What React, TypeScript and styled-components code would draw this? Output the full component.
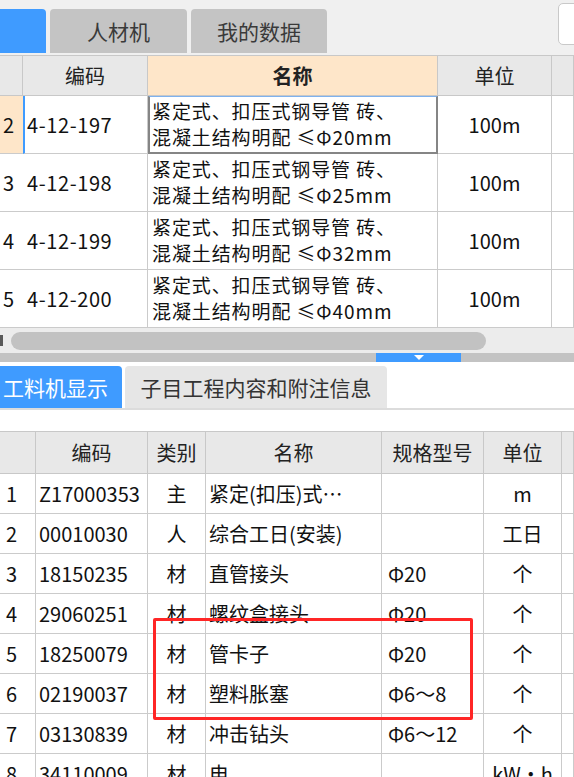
import React from "react";
import styled, { createGlobalStyle } from "styled-components";

const Global = createGlobalStyle`
  html, body { margin: 0; padding: 0; background: #ffffff; }
  body {
    width: 574px;
    height: 777px;
    overflow: hidden;
    font-family: "Noto Sans CJK SC", "Noto Sans", sans-serif;
    color: #111;
  }
`;

const Page = styled.div`
  width: 574px;
  height: 777px;
  overflow: hidden;
  display: flex;
  flex-direction: column;
  background: #fff;
`;

/* ---------- top tab bar ---------- */
const TopBar = styled.div`
  height: 55px;
  flex-shrink: 0;
  background: #f0f0f0;
  display: flex;
  align-items: flex-start;
  gap: 4px;
  overflow: hidden;
`;

const TopTab = styled.div<{ $w: number; $active?: boolean }>`
  width: ${(p) => p.$w}px;
  height: 44px;
  margin-top: 9px;
  flex-shrink: 0;
  box-sizing: border-box;
  border-radius: ${(p) => (p.$active ? "0 4px 0 0" : "4px 4px 0 0")};
  background: ${(p) => (p.$active ? "#3f9bff" : "#c4c4c4")};
  color: #3a3a3a;
  font-size: 21px;
  display: flex;
  align-items: center;
  justify-content: center;
`;

const SearchBox = styled.div`
  margin-left: auto;
  margin-right: -26px;
  margin-top: 3px;
  width: 42px;
  height: 42px;
  flex-shrink: 0;
  box-sizing: border-box;
  background: #fff;
  border: 1px solid #c9c9c9;
  border-radius: 5px;
`;

/* ---------- generic grid ---------- */
const Grid = styled.div<{ $cols: string; $head: number; $row: number }>`
  display: grid;
  grid-template-columns: ${(p) => p.$cols};
  grid-template-rows: ${(p) => p.$head}px;
  grid-auto-rows: ${(p) => p.$row}px;
  border-top: 1px solid #c8c8c8;
  flex-shrink: 0;
`;

const Head = styled.div<{ $accent?: boolean }>`
  box-sizing: border-box;
  background: ${(p) => (p.$accent ? "#fee6c9" : "#e8e8e8")};
  border-right: 1px solid #c8c8c8;
  border-bottom: 1px solid #c8c8c8;
  font-size: 20px;
  font-weight: ${(p) => (p.$accent ? 700 : 400)};
  color: #222;
  display: flex;
  align-items: center;
  justify-content: center;
  white-space: nowrap;
  overflow: hidden;
`;

const Cell = styled.div<{
  $align?: "left" | "center" | "right";
  $pad?: number;
  $bg?: string;
  $marker?: boolean;
  $selected?: boolean;
}>`
  box-sizing: border-box;
  background: ${(p) => p.$bg || "#fff"};
  border-right: 1px solid #cbcbcb;
  border-bottom: 1px solid #cbcbcb;
  ${(p) => (p.$marker ? "border-left: 2px solid #3f9bff;" : "")}
  ${(p) =>
    p.$selected
      ? "border: 2px solid #858585; border-top: 1px solid #7fb2ee;"
      : ""}
  font-size: 20px;
  color: #111;
  display: flex;
  align-items: center;
  justify-content: ${(p) =>
    p.$align === "center" ? "center" : p.$align === "right" ? "flex-end" : "flex-start"};
  padding: 0 ${(p) => p.$pad ?? 4}px;
  white-space: nowrap;
  overflow: hidden;
`;

const TwoLine = styled.div`
  display: flex;
  flex-direction: column;
  line-height: 26px;
  font-size: 19px;
  letter-spacing: 0.9px;
  margin-top: -2px;
`;

const Mono = styled.span`
  letter-spacing: 0.6px;
`;

/* ---------- scroll + splitter ---------- */
const ScrollTrack = styled.div`
  height: 25px;
  flex-shrink: 0;
  background: #ececec;
  display: flex;
  align-items: center;
  gap: 8px;
`;

const ScrollArrow = styled.div`
  width: 3px;
  height: 11px;
  background: #5a5a5a;
`;

const ScrollThumb = styled.div`
  width: 475px;
  height: 18px;
  border-radius: 9px;
  background: #c2c2c2;
`;

const Splitter = styled.div`
  height: 9px;
  flex-shrink: 0;
  background: #c3c3c3;
  padding-left: 376px;
  display: flex;
`;

const SplitHandle = styled.div`
  width: 85px;
  height: 9px;
  background: #3f9bff;
  display: flex;
  justify-content: center;
  align-items: flex-start;
  padding-top: 2px;
  box-sizing: border-box;
`;

/* ---------- bottom tabs ---------- */
const BottomTabs = styled.div`
  margin-top: 4px;
  height: 44px;
  flex-shrink: 0;
  display: flex;
  align-items: flex-start;
  gap: 3px;
  border-bottom: 2px solid #dcdcdc;
  box-sizing: border-box;
`;

const BottomTab = styled.div<{ $w: number; $active?: boolean }>`
  width: ${(p) => p.$w}px;
  height: 42px;
  flex-shrink: 0;
  box-sizing: border-box;
  border-radius: ${(p) => (p.$active ? "0 4px 0 0" : "4px 4px 0 0")};
  background: ${(p) => (p.$active ? "#3f9bff" : "#e6e6e6")};
  color: ${(p) => (p.$active ? "#fff" : "#333")};
  font-size: 21px;
  display: flex;
  align-items: center;
  justify-content: ${(p) => (p.$active ? "flex-start" : "center")};
  padding-left: ${(p) => (p.$active ? 3 : 0)}px;
  white-space: nowrap;
`;

const Spacer = styled.div`
  height: 21px;
  flex-shrink: 0;
`;

const BottomWrap = styled.div`
  position: relative;
  flex-shrink: 0;
`;

const Highlight = styled.div`
  position: absolute;
  left: 153px;
  top: 187px;
  width: 320px;
  height: 102px;
  box-sizing: border-box;
  border: 3px solid #ff2626;
  border-radius: 2px;
  pointer-events: none;
`;

const topRows = [
  { idx: "2", code: "4-12-197", d: "20", active: true },
  { idx: "3", code: "4-12-198", d: "25" },
  { idx: "4", code: "4-12-199", d: "32" },
  { idx: "5", code: "4-12-200", d: "40" },
];

const bottomRows = [
  { n: "1", code: "Z17000353", type: "主", name: "紧定(扣压)式…", spec: "", unit: "m" },
  { n: "2", code: "00010030", type: "人", name: "综合工日(安装)", spec: "", unit: "工日" },
  { n: "3", code: "18150235", type: "材", name: "直管接头", spec: "Φ20", unit: "个" },
  { n: "4", code: "29060251", type: "材", name: "螺纹盒接头", spec: "Φ20", unit: "个" },
  { n: "5", code: "18250079", type: "材", name: "管卡子", spec: "Φ20", unit: "个" },
  { n: "6", code: "02190037", type: "材", name: "塑料胀塞", spec: "Φ6～8", unit: "个" },
  { n: "7", code: "03130839", type: "材", name: "冲击钻头", spec: "Φ6～12", unit: "个" },
  { n: "8", code: "34110009", type: "材", name: "电", spec: "", unit: "kW·h" },
];

export default function App() {
  return (
    <Page>
      <Global />
      <TopBar>
        <TopTab $w={46} $active />
        <TopTab $w={137}>人材机</TopTab>
        <TopTab $w={136}>我的数据</TopTab>
        <SearchBox />
      </TopBar>

      <Grid $cols="23px 125px 290px 114px 22px" $head={40} $row={58}>
        <Head />
        <Head>编码</Head>
        <Head $accent>名称</Head>
        <Head>单位</Head>
        <Head />
        {topRows.map((r) => (
          <React.Fragment key={r.code}>
            <Cell $align="right" $pad={14} $bg={r.active ? "#fee6c9" : "#fff"}>
              {r.idx}
            </Cell>
            <Cell $marker={r.active} $pad={r.active ? 2 : 4}>
              <Mono>{r.code}</Mono>
            </Cell>
            <Cell $selected={r.active} $pad={r.active ? 2 : 4}>
              <TwoLine>
                <span>紧定式、扣压式钢导管 砖、</span>
                <span>混凝土结构明配 ≤Φ{r.d}mm</span>
              </TwoLine>
            </Cell>
            <Cell $align="center">100m</Cell>
            <Cell />
          </React.Fragment>
        ))}
      </Grid>

      <ScrollTrack>
        <ScrollArrow />
        <ScrollThumb />
      </ScrollTrack>
      <Splitter>
        <SplitHandle>
          <svg width="10" height="5" viewBox="0 0 10 5">
            <path d="M0 0 L10 0 L5 5 Z" fill="#ffffff" />
          </svg>
        </SplitHandle>
      </Splitter>

      <BottomTabs>
        <BottomTab $w={122} $active>
          工料机显示
        </BottomTab>
        <BottomTab $w={262}>子目工程内容和附注信息</BottomTab>
      </BottomTabs>
      <Spacer />

      <BottomWrap>
        <Grid $cols="36px 112px 58px 176px 102px 78px 12px" $head={42} $row={40}>
          <Head />
          <Head>编码</Head>
          <Head>类别</Head>
          <Head>名称</Head>
          <Head>规格型号</Head>
          <Head>单位</Head>
          <Head />
          {bottomRows.map((r) => (
            <React.Fragment key={r.n}>
              <Cell $pad={6}>{r.n}</Cell>
              <Cell $pad={3}>{r.code}</Cell>
              <Cell $align="center">{r.type}</Cell>
              <Cell $pad={3}>{r.name}</Cell>
              <Cell $pad={6}>{r.spec}</Cell>
              <Cell $align="center">{r.unit}</Cell>
              <Cell />
            </React.Fragment>
          ))}
        </Grid>
        <Highlight />
      </BottomWrap>
    </Page>
  );
}
